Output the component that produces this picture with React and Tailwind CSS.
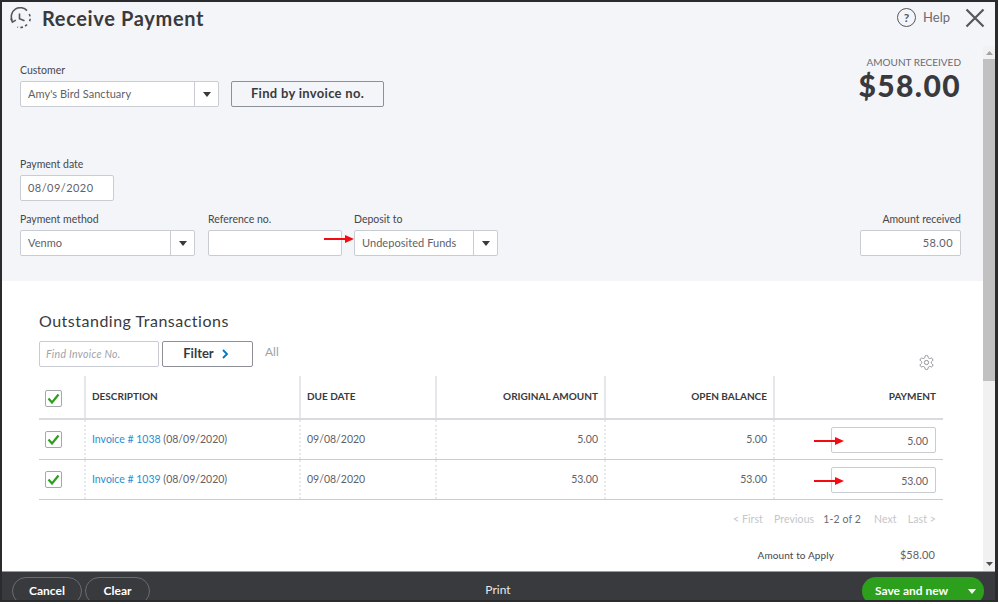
import React from 'react';

const Caret = () => (
  <svg width="8" height="5" viewBox="0 0 8 5"><path d="M0 0h8L4 5z" fill="#393a3d" /></svg>
);

const RedArrow = ({ className }) => (
  <svg className={className} width="30" height="8" viewBox="0 0 30 8">
    <path d="M0 3h21V0l9 4-9 4V5H0z" fill="#f40b12" />
  </svg>
);

const Select = ({ value, className = '' }) => (
  <div className={`flex h-[26px] bg-white border border-[#c9ccd3] rounded-[2px] ${className}`}>
    <div className="flex-1 pl-[7px] text-[11px] leading-[24px] tracking-[0.05px] text-[#5f6167]">{value}</div>
    <div className="w-[24px] border-l border-[#c9ccd3] flex items-center justify-center"><Caret /></div>
  </div>
);

const Label = ({ children, className = '' }) => (
  <div className={`text-[10.5px] leading-[14px] text-[#45474c] mb-[4px] ${className}`}>{children}</div>
);

const Check = () => (
  <div className="w-[17px] h-[17px] bg-white border border-[#a4a7ae] rounded-[2px] flex items-center justify-center">
    <svg width="13" height="11" viewBox="0 0 13 11" fill="none">
      <path d="M1.5 5.5L5 9.5L11.5 1.5" stroke="#2ca01c" strokeWidth="2.2" />
    </svg>
  </div>
);

const Th = ({ children, right, className = '' }) => (
  <div className={`border-r-2 border-[#e6e7ea] last:border-r-0 pl-[6px] pr-[6px] last:pr-[7px] pb-[1px] flex items-center text-[10px] font-bold text-[#393a3d] ${right ? 'justify-end' : ''} ${className}`}>
    {children}
  </div>
);

const Td = ({ children, right, className = '' }) => (
  <div className={`border-r-2 border-dotted border-[#e8e9ec] last:border-r-0 pl-[6px] pr-[6px] last:pr-[7px] flex items-center text-[10.5px] text-[#5f6167] ${right ? 'justify-end' : ''} ${className}`}>
    {children}
  </div>
);

const rows = [
  { invoice: 'Invoice # 1038', amount: '5.00' },
  { invoice: 'Invoice # 1039', amount: '53.00' },
];

const columns = 'grid grid-cols-[47px_215px_136px_169px_169px_168px]';

export default function App() {
  return (
    <div className="w-[999px] h-[604px] bg-white">
      <div className="w-[998px] h-[602px] flex flex-col bg-[#f4f5f8] border-[2px] border-r-[3px] border-[#2a2b2d] overflow-hidden font-['Lato','Noto_Sans',sans-serif]">
        {/* title bar */}
        <div className="h-[44px] shrink-0 flex items-center pl-[8px] pr-[10px] pb-[13px]">
          <svg width="22" height="22" viewBox="0 0 22 22" fill="none" stroke="#55575c" strokeWidth="1.6">
            <path d="M2.2 13.5A9 9 0 0 1 17 3.6" />
            <path d="M19.2 7a9 9 0 0 1-.2 8.5" strokeDasharray="2.6 2.2" />
            <path d="M17 17.5a9 9 0 0 1-9.5 2.6" strokeDasharray="2.6 2.2" />
            <path d="M0.8 11.5l1.6 3.6 3.4-2" />
            <path d="M9.5 6.5v5.2l5 2" />
          </svg>
          <div className="ml-[10px] text-[20px] font-bold tracking-[0.65px] text-[#393a3d]">Receive Payment</div>
          <div className="flex-1" />
          <div className="w-[19px] h-[19px] rounded-full border-[1.5px] border-[#55575c] flex items-center justify-center text-[12px] font-bold text-[#55575c]">?</div>
          <div className="ml-[7px] mt-[1px] text-[13px] text-[#6b6c72]">Help</div>
          <svg className="ml-[15px]" width="20" height="20" viewBox="0 0 20 20" stroke="#55575c" strokeWidth="2.2">
            <path d="M1.5 1.5l17 17M18.5 1.5l-17 17" />
          </svg>
        </div>

        <div className="flex-1 min-h-0 flex">
          <div className="flex-1 min-w-0 overflow-hidden">
            {/* form header */}
            <div className="h-[235px] pl-[18px] pr-[22px] flex justify-between">
              <div>
                <Label className="mt-[17px]">Customer</Label>
                <div className="flex items-start">
                  <Select value="Amy's Bird Sanctuary" className="w-[199px]" />
                  <button className="ml-[12px] w-[153px] h-[26px] border border-[#8d9096] rounded-[2px] text-[13px] font-bold tracking-[0.3px] text-[#393a3d]">Find by invoice no.</button>
                </div>
                <Label className="mt-[50px]">Payment date</Label>
                <div className="w-[94px] h-[26px] bg-white border border-[#c9ccd3] rounded-[2px] pl-[7px] text-[11px] leading-[24px] tracking-[0.45px] text-[#5f6167]">08/09/2020</div>
                <div className="mt-[11px] flex">
                  <div className="w-[175px]">
                    <Label>Payment method</Label>
                    <Select value="Venmo" />
                  </div>
                  <div className="ml-[13px] w-[134px]">
                    <Label>Reference no.</Label>
                    <div className="h-[26px] bg-white border border-[#c9ccd3] rounded-[2px]" />
                  </div>
                  <div className="ml-[12px] w-[144px] relative">
                    <Label>Deposit to</Label>
                    <Select value="Undeposited Funds" />
                    <RedArrow className="absolute left-[-30px] top-[23px]" />
                  </div>
                </div>
              </div>
              <div className="flex flex-col items-end">
                <div className="mt-[9px] text-[10px] leading-[14px] text-[#6b6c72]">AMOUNT RECEIVED</div>
                <div className="text-[30px] leading-[32px] font-black tracking-[1.4px] text-[#393a3d]">$58.00</div>
                <div className="flex-1" />
                <Label>Amount received</Label>
                <div className="mb-[25px] w-[101px] h-[26px] bg-white border border-[#c9ccd3] rounded-[2px] pr-[7px] text-right text-[11px] leading-[24px] tracking-[0.45px] text-[#5f6167]">58.00</div>
              </div>
            </div>

            {/* transactions */}
            <div className="h-[290px] bg-white pl-[37px] pr-[40px] pt-[30px]">
              <div className="text-[16px] leading-[20px] tracking-[0.5px] text-[#393a3d]">Outstanding Transactions</div>
              <div className="mt-[10px] flex items-start">
                <div className="w-[120px] h-[26px] border border-[#c9ccd3] rounded-[2px] pl-[6px] text-[10.5px] leading-[24px] italic tracking-[0.3px] text-[#a0a2a8]">Find Invoice No.</div>
                <button className="ml-[3px] w-[91px] h-[26px] border border-[#8d9096] rounded-[2px] flex items-center justify-center pr-[3px] text-[13px] font-bold text-[#393a3d]">
                  Filter
                  <svg className="ml-[8px]" width="7" height="10" viewBox="0 0 7 10" fill="none" stroke="#0077c5" strokeWidth="1.8"><path d="M1 1l4 4-4 4" /></svg>
                </button>
                <div className="ml-[12px] text-[12px] leading-[22px] text-[#a0a2a8]">All</div>
                <div className="flex-1" />
                <svg className="mt-[13px] mr-[8px]" width="17" height="17" viewBox="0 0 24 24" fill="none" stroke="#8d9096" strokeWidth="1.4">
                  <path d="M12.22 2h-.44a2 2 0 0 0-2 2v.18a2 2 0 0 1-1 1.73l-.43.25a2 2 0 0 1-2 0l-.15-.08a2 2 0 0 0-2.73.73l-.22.38a2 2 0 0 0 .73 2.73l.15.1a2 2 0 0 1 1 1.72v.51a2 2 0 0 1-1 1.74l-.15.09a2 2 0 0 0-.73 2.73l.22.38a2 2 0 0 0 2.73.73l.15-.08a2 2 0 0 1 2 0l.43.25a2 2 0 0 1 1 1.73V20a2 2 0 0 0 2 2h.44a2 2 0 0 0 2-2v-.18a2 2 0 0 1 1-1.73l.43-.25a2 2 0 0 1 2 0l.15.08a2 2 0 0 0 2.73-.73l.22-.39a2 2 0 0 0-.73-2.73l-.15-.08a2 2 0 0 1-1-1.74v-.5a2 2 0 0 1 1-1.74l.15-.09a2 2 0 0 0 .73-2.73l-.22-.38a2 2 0 0 0-2.73-.73l-.15.08a2 2 0 0 1-2 0l-.43-.25a2 2 0 0 1-1-1.73V4a2 2 0 0 0-2-2z" />
                  <circle cx="12" cy="12" r="3" />
                </svg>
              </div>

              <div className={`${columns} mt-[5px] h-[44px] border-b-2 border-[#d9dadf]`}>
                <Th className="pl-[5px] pt-[3px]"><Check /></Th>
                <Th>DESCRIPTION</Th>
                <Th>DUE DATE</Th>
                <Th right>ORIGINAL AMOUNT</Th>
                <Th right>OPEN BALANCE</Th>
                <Th right>PAYMENT</Th>
              </div>
              {rows.map((row) => (
                <div key={row.invoice} className={`${columns} h-[40px] border-b border-[#c9ccd3]`}>
                  <Td className="pl-[5px]"><Check /></Td>
                  <Td><span className="text-[#2b8dce]">{row.invoice}</span>&nbsp;(08/09/2020)</Td>
                  <Td>09/08/2020</Td>
                  <Td right>{row.amount}</Td>
                  <Td right>{row.amount}</Td>
                  <Td right>
                    <div className="relative w-[105px] h-[26px] bg-white border border-[#c9ccd3] rounded-[2px] pr-[7px] text-right leading-[26px]">
                      {row.amount}
                      <RedArrow className="absolute left-[-18px] top-[9px]" />
                    </div>
                  </Td>
                </div>
              ))}

              <div className="mt-[12px] h-[16px] flex justify-end items-center pr-[7px] text-[10.5px] tracking-[0.1px] text-[#c4c6cb]">
                <span>&lt; First</span>
                <span className="ml-[11px]">Previous</span>
                <span className="ml-[9px] text-[#6b6c72]">1-2 of 2</span>
                <span className="ml-[13px]">Next</span>
                <span className="ml-[11px]">Last &gt;</span>
              </div>
              <div className="mt-[19px] flex justify-end items-center pr-[8px] text-[#45474c]">
                <span className="text-[10px] tracking-[0.1px]">Amount to Apply</span>
                <span className="ml-[66px] text-[11px] tracking-[0.1px] text-[#5f6167]">$58.00</span>
              </div>
            </div>
          </div>

          {/* scrollbar */}
          <div className="w-[12px] shrink-0 bg-[#f1f1f1] flex flex-col items-center">
            <svg className="mt-[5px]" width="7" height="4" viewBox="0 0 7 4"><path d="M0 4h7L3.5 0z" fill="#a3a3a3" /></svg>
            <div className="mt-[4px] w-full h-[322px] bg-[#c1c1c1]" />
            <div className="flex-1" />
            <svg className="mb-[5px]" width="7" height="4" viewBox="0 0 7 4"><path d="M0 0h7L3.5 4z" fill="#505050" /></svg>
          </div>
        </div>

        {/* footer */}
        <div className="h-[29px] shrink-0 bg-[#393a3d] border-t border-[#9a9b9e] flex items-start pl-[10px] pr-[11px] pt-[5px] text-[12px] text-white font-bold">
          <button className="w-[70px] h-[28px] rounded-full border border-[#6b6c72]">Cancel</button>
          <button className="ml-[3px] w-[65px] h-[28px] rounded-full border border-[#6b6c72]">Clear</button>
          <div className="flex-1 text-center font-normal leading-[25px] pr-[16px] text-[#e8e8e9]">Print</div>
          <div className="w-[122px] h-[28px] shrink-0 rounded-full bg-[#2ca01c] flex items-center">
            <span className="ml-[13px] w-[93px] whitespace-nowrap">Save and new</span>
            <svg width="8" height="5" viewBox="0 0 8 5"><path d="M0 0h8L4 5z" fill="#fff" /></svg>
          </div>
        </div>
      </div>
    </div>
  );
}
